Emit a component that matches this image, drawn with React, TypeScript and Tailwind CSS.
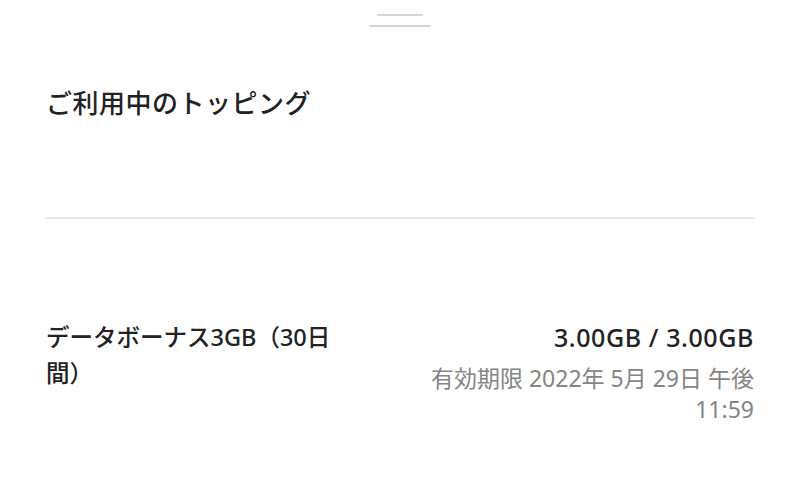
export default function App() {
  return (
    <div
      className="w-[800px] h-[486px] bg-white overflow-hidden text-[#222222]"
      style={{ fontFamily: '"Noto Sans", "Noto Sans CJK JP", sans-serif' }}
    >
      <div className="flex flex-col items-center pt-[14px] gap-[9px]">
        <div className="w-[46px] h-[2px] bg-[#d6d6d6] rounded-full" />
        <div className="w-[62px] h-[2px] bg-[#d6d6d6] rounded-full" />
      </div>

      <div className="px-[46px]">
        <h1 className="mt-[58px] text-[26px] leading-[36px] font-medium tracking-[0.5px]">
          ご利用中のトッピング
        </h1>

        <div className="mt-[96px] h-[2px] bg-[#e6e6e6]" />

        <div className="mt-[100px] flex justify-between items-start">
          <div className="w-[296px] text-[23.5px] leading-[36px] font-medium">
            データボーナス3GB（30日間）
          </div>
          <div className="flex flex-col items-end text-right">
            <div className="text-[25px] leading-[36px] font-medium tracking-[0.6px]">3.00GB / 3.00GB</div>
            <div className="w-[340px] text-[23px] leading-[31px] text-[#858585] mt-[8px]">
              有効期限 2022年 5月 29日 午後 11:59
            </div>
          </div>
        </div>
      </div>
    </div>
  );
}
